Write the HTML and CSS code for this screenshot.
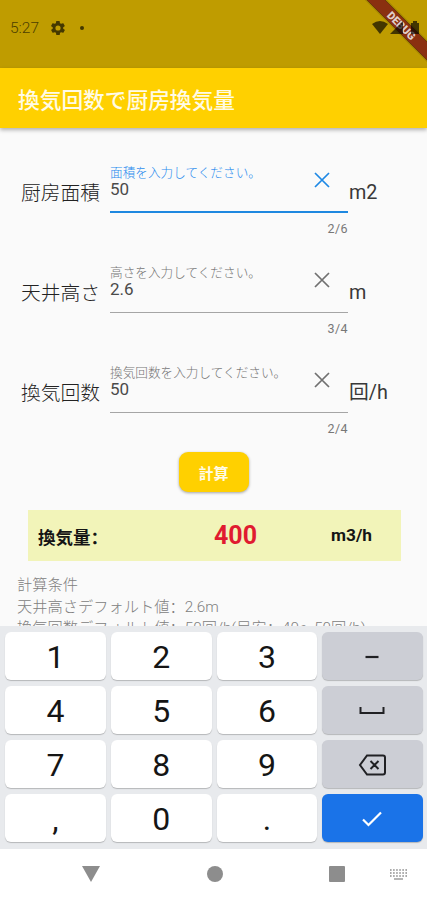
FILE: index.html
```html
<!DOCTYPE html>
<html lang="en">
  <head>
    <meta charset="UTF-8" />
    <meta name="viewport" content="width=device-width, initial-scale=1.0" />
    <title>換気回数で厨房換気量</title>
    <link rel="stylesheet" href="styles.css">
  </head>
  <body>
    <div class="screen">
      <!-- Status bar -->
      <div class="status-bar">
        <svg class="debug-banner" width="72" height="68" viewBox="0 0 72 68">
          <path class="banner-shadow" d="M12 0L72 60V42L30 0z" />
          <path class="banner-band" d="M12 0L72 60V42L30 0z" />
          <text x="46.5" y="29.5" transform="rotate(45 46.5 25.5)" text-anchor="middle">DEBUG</text>
        </svg>
        <span class="clock">5:27</span>
        <svg class="gear" width="14" height="14" viewBox="2 2 20 20">
          <path fill-rule="evenodd" d="M19.4 13a7.500 7.500 0 0 0 0-2l2.100-1.600a.5.5 0 0 0 .1-.6l-2-3.500a.5.5 0 0 0-.6-.2l-2.500 1a7.300 7.300 0 0 0-1.700-1l-.4-2.600a.5.5 0 0 0-.5-.5h-4a.5.5 0 0 0-.5.5L9 5.100a7.300 7.300 0 0 0-1.700 1l-2.500-1a.5.5 0 0 0-.6.2l-2 3.500a.5.5 0 0 0 .1.6L4.500 11a7.500 7.500 0 0 0 0 2l-2.100 1.600a.5.5 0 0 0-.1.6l2 3.500c.1.200.4.3.6.2l2.500-1c.5.4 1.100.7 1.700 1l.4 2.600c0 .3.2.5.5.5h4c.3 0 .5-.2.5-.5l.4-2.600c.6-.3 1.200-.6 1.700-1l2.500 1c.2.1.5 0 .6-.2l2-3.500a.5.5 0 0 0-.1-.6zM12 15.700a3.700 3.700 0 1 1 0-7.400 3.700 3.700 0 0 1 0 7.400z" />
        </svg>
        <span class="dot"></span>
        <svg class="signals" width="48" height="16" viewBox="0 0 48 16">
          <path d="M0 4Q8-2 16 4L8 14z" />
          <path d="M31 1v13H18z" />
          <path d="M39 3h2V1h4v2h2v11h-8z" />
        </svg>
      </div>

      <!-- App bar -->
      <header class="app-bar">
        <h1>換気回数で厨房換気量</h1>
      </header>

      <main class="content">
        <div class="field-row">
          <label class="field-name">厨房面積</label>
          <div class="field active">
            <div class="field-box">
              <div class="field-text">
                <div class="hint">面積を入力してください。</div>
                <div class="value">50</div>
              </div>
              <svg class="clear" width="16" height="16" viewBox="0 0 16 16"><path d="M1 1l14 14M15 1L1 15" /></svg>
            </div>
            <div class="counter">2/6</div>
          </div>
          <span class="unit">m2</span>
        </div>

        <div class="field-row">
          <label class="field-name">天井高さ</label>
          <div class="field">
            <div class="field-box">
              <div class="field-text">
                <div class="hint">高さを入力してください。</div>
                <div class="value">2.6</div>
              </div>
              <svg class="clear" width="16" height="16" viewBox="0 0 16 16"><path d="M1 1l14 14M15 1L1 15" /></svg>
            </div>
            <div class="counter">3/4</div>
          </div>
          <span class="unit">m</span>
        </div>

        <div class="field-row">
          <label class="field-name">換気回数</label>
          <div class="field">
            <div class="field-box">
              <div class="field-text">
                <div class="hint">換気回数を入力してください。</div>
                <div class="value">50</div>
              </div>
              <svg class="clear" width="16" height="16" viewBox="0 0 16 16"><path d="M1 1l14 14M15 1L1 15" /></svg>
            </div>
            <div class="counter">2/4</div>
          </div>
          <span class="unit">回/h</span>
        </div>

        <button class="calc-btn">計算</button>

        <div class="result">
          <span class="result-name">換気量：</span>
          <span class="result-value">400</span>
          <span class="result-unit">m3/h</span>
        </div>

        <div class="notes">
          <p>計算条件</p>
          <p>天井高さデフォルト値：2.6m</p>
          <p>換気回数デフォルト値：50回/h(目安：40～50回/h)</p>
        </div>
      </main>

      <!-- Numeric keyboard -->
      <div class="keyboard">
        <div class="key">1</div>
        <div class="key">2</div>
        <div class="key">3</div>
        <div class="key gray">
          <svg width="14" height="4" viewBox="0 0 14 4"><path d="M0.500 2h13" stroke-width="2.200" /></svg>
        </div>
        <div class="key">4</div>
        <div class="key">5</div>
        <div class="key">6</div>
        <div class="key gray">
          <svg width="26" height="8" viewBox="0 0 26 8"><path d="M1.500 0v6h23V0" stroke-width="2" /></svg>
        </div>
        <div class="key">7</div>
        <div class="key">8</div>
        <div class="key">9</div>
        <div class="key gray">
          <svg width="28" height="22" viewBox="0 0 28 22"><path d="M9 1.500h16a2 2 0 0 1 2 2v15a2 2 0 0 1-2 2H9L2 11zM12.500 7l8 8M20.500 7l-8 8" stroke-width="2" /></svg>
        </div>
        <div class="key">,</div>
        <div class="key">0</div>
        <div class="key">.</div>
        <div class="key enter">
          <svg width="20" height="16" viewBox="0 0 20 16"><path d="M1 8.500l5.500 5.500L19 1.500" stroke-width="2.200" /></svg>
        </div>
      </div>

      <!-- Navigation bar -->
      <nav class="nav-bar">
        <svg width="18" height="16" viewBox="0 0 18 16"><path d="M0 0h18L9 16z" /></svg>
        <svg width="16" height="16" viewBox="0 0 16 16"><circle cx="8" cy="8" r="8" /></svg>
        <svg width="16" height="16" viewBox="0 0 16 16"><rect width="16" height="16" rx="1" /></svg>
        <svg class="ime" width="17" height="11" viewBox="0 0 17 11">
          <path d="M0 1h17M0 4h17M0 7h17" stroke-width="1.400" stroke-dasharray="1.600 1.480" />
          <path d="M4 10h9" stroke-width="1.300" />
        </svg>
      </nav>
    </div>
  </body>
</html>
```

FILE: styles.css
```css
* {
  margin: 0;
  padding: 0;
  box-sizing: border-box;
}

body {
  font-family: Roboto, "Noto Sans CJK SC", sans-serif;
  background-color: #fafafa;
}

.screen {
  width: 427px;
  height: 900px;
  display: flex;
  flex-direction: column;
  overflow: hidden;
}

.status-bar {
  position: relative;
  height: 68px;
  flex-shrink: 0;
  background-color: #bf9c00;
  display: flex;
  align-items: center;
  padding: 0 8px 13px 10px;
}

.clock {
  font-size: 15.5px;
  font-weight: 300;
  color: #4d3f00;
  width: 41px;
}

.gear {
  fill: #443800;
}

.dot {
  width: 4px;
  height: 4px;
  border-radius: 50%;
  background-color: #443800;
  margin-left: 15px;
}

.signals {
  position: relative;
  margin-left: auto;
  margin-right: -1px;
  fill: rgba(0, 0, 0, 0.65);
}

.debug-banner {
  position: absolute;
  top: 0;
  right: 0;
}

.banner-shadow {
  stroke: rgba(0, 0, 0, 0.15);
  stroke-width: 3;
}

.banner-band {
  fill: #8a3010;
}

.debug-banner text {
  fill: #e0cfcb;
  font-size: 11px;
  font-weight: 900;
}

.app-bar {
  position: relative;
  height: 60px;
  flex-shrink: 0;
  background-color: #ffd000;
  box-shadow: 0 2px 4px rgba(0, 0, 0, 0.3);
  display: flex;
  align-items: center;
  padding: 6px 18px 0;
}

.app-bar h1 {
  font-size: 21.7px;
  font-weight: 500;
  line-height: 30px;
  color: #fffbe6;
}

.content {
  height: 498px;
  flex-shrink: 0;
  overflow: hidden;
  padding-top: 30px;
  display: flex;
  flex-direction: column;
}

.field-row {
  height: 100px;
  flex-shrink: 0;
  display: flex;
  padding-left: 21px;
}

.field-name {
  width: 89px;
  padding-top: 21px;
  font-size: 19.8px;
  line-height: 30px;
  color: #222;
  font-weight: 300;
}

.field {
  width: 238px;
}

.field-box {
  height: 55px;
  display: flex;
  justify-content: space-between;
  border-bottom: 1px solid #a5a5a5;
}

.field-text {
  padding-top: 7px;
}

.hint {
  font-size: 12.65px;
  line-height: 16px;
  color: #757575;
  font-weight: 300;
  white-space: nowrap;
}

.value {
  margin-top: -1px;
  font-size: 17px;
  line-height: 18px;
  color: #4a4a4a;
}

.clear {
  margin: 14px 18px 0 0;
  fill: none;
  stroke: #707070;
  stroke-width: 1.7;
}

.active .field-box {
  border-bottom: 2px solid #1e88e0;
}

.active .hint {
  color: #2b8cee;
}

.active .clear {
  stroke: #1e88e5;
}

.counter {
  padding-top: 8px;
  font-size: 12.5px;
  line-height: 16px;
  letter-spacing: 0.4px;
  text-align: right;
  color: #777;
}

.unit {
  padding: 20px 0 0 1px;
  font-size: 19.8px;
  line-height: 30px;
  color: #383838;
}

.calc-btn {
  align-self: center;
  flex-shrink: 0;
  width: 70px;
  height: 40px;
  margin-top: -6px;
  padding-top: 1px;
  border: none;
  border-radius: 9px;
  background-color: #ffd000;
  box-shadow: 0 1px 3px rgba(0, 0, 0, 0.35);
  color: #fffbe6;
  font-family: inherit;
  font-size: 15px;
  font-weight: 700;
}

.result {
  height: 51px;
  flex-shrink: 0;
  margin: 18px 26px 0 28px;
  padding: 0 29px 0 10px;
  background-color: #f2f4b9;
  display: flex;
  justify-content: space-between;
  align-items: center;
  font-weight: 700;
  color: #151515;
}

.result-name {
  padding-top: 1px;
  font-size: 17.5px;
  width: 132px;
}

.result-value {
  font-size: 25px;
  color: #e01b30;
  margin-right: 30px;
}

.result-unit {
  padding-bottom: 1px;
  font-size: 17.3px;
}

.notes {
  padding: 14px 17px 0;
  font-size: 15.25px;
  line-height: 21.7px;
  font-weight: 300;
  color: #808080;
  white-space: nowrap;
}

.keyboard {
  height: 223px;
  flex-shrink: 0;
  background-color: #e8eaed;
  padding: 6px 4px 7px 5px;
  display: grid;
  grid-template-columns: repeat(4, 1fr);
  grid-template-rows: repeat(4, 1fr);
  gap: 6px 5px;
}

.key {
  background-color: #fff;
  border-radius: 6px;
  box-shadow: 0 1px 1px rgba(0, 0, 0, 0.22);
  display: flex;
  justify-content: center;
  align-items: center;
  padding-top: 2px;
  font-size: 32px;
  line-height: 1;
  color: #151515;
}

.key svg {
  fill: none;
  stroke: #202124;
  margin-right: 1px;
}

.gray {
  background-color: #ccced5;
}

.enter {
  background-color: #1a73e8;
}

.enter svg {
  stroke: #fff;
}

.nav-bar {
  height: 51px;
  flex-shrink: 0;
  background-color: #fff;
  display: flex;
  align-items: center;
  justify-content: space-between;
  padding: 0 20px 1px 82px;
}

.nav-bar svg {
  fill: #8d8d8d;
}

.nav-bar .ime {
  margin-left: -62px;
  fill: none;
  stroke: #8d8d8d;
}
```
